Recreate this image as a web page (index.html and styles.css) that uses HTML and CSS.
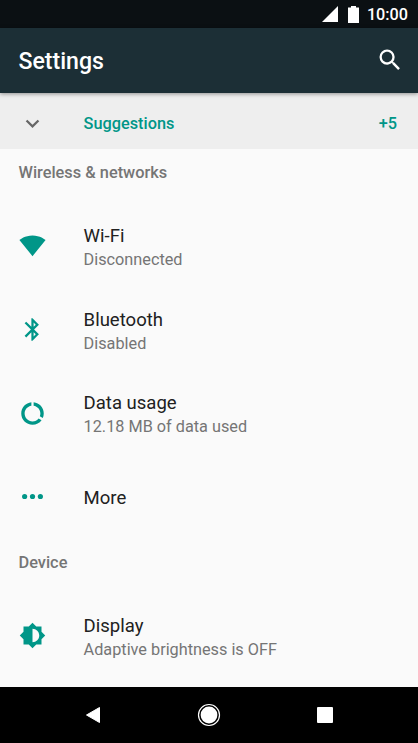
FILE: index.html
```html
<!DOCTYPE html>
<html lang="en">
<head>
<meta charset="utf-8">
<title>Settings</title>
<link rel="stylesheet" href="styles.css">
</head>
<body>
<div class="screen">
  <div class="status">
    <svg class="signal" viewBox="0 0 16 16"><path d="M0 16L16 0V16Z"/></svg>
    <svg class="battery" viewBox="0 0 11 17"><path d="M3 0h5v1.5h3V17H0V1.5h3z"/></svg>
    <span class="clock">10:00</span>
  </div>
  <header class="appbar">
    <h1>Settings</h1>
    <svg class="search" viewBox="0 0 24 24"><path d="M15.5 14h-.79l-.28-.27A6.47 6.47 0 0 0 16 9.5 6.5 6.5 0 1 0 9.5 16c1.61 0 3.09-.59 4.23-1.57l.27.28v.79l5 4.99L20.49 19l-4.99-5zm-6 0C7.01 14 5 11.99 5 9.5S7.01 5 9.5 5 14 7.01 14 9.5 11.99 14 9.5 14z"/></svg>
  </header>
  <div class="suggestions">
    <svg class="icon" viewBox="0 0 24 24"><path d="M16.59 8.59L12 13.17 7.41 8.59 6 10l6 6 6-6z"/></svg>
    <span class="label">Suggestions</span>
    <span class="count">+5</span>
  </div>
  <main class="list">
    <h2>Wireless &amp; networks</h2>
    <div class="row">
      <svg class="icon" viewBox="0 0 24 24"><path d="M12.01 21.49L23.64 7c-.45-.34-4.93-4-11.64-4C5.28 3 .81 6.66.36 7l11.63 14.49.01.01.01-.01z"/></svg>
      <div class="text"><div class="title">Wi-Fi</div><div class="sub">Disconnected</div></div>
    </div>
    <div class="row">
      <svg class="icon" viewBox="0 0 24 24"><path d="M17.71 7.71L12 2h-1v7.59L6.41 5 5 6.41 10.59 12 5 17.59 6.41 19 11 14.41V22h1l5.71-5.71-4.3-4.29 4.3-4.29zM13 5.83l1.88 1.88L13 9.59V5.83zm1.88 10.46L13 18.17v-3.76l1.88 1.88z"/></svg>
      <div class="text"><div class="title">Bluetooth</div><div class="sub">Disabled</div></div>
    </div>
    <div class="row">
      <svg class="icon" viewBox="0 0 24 24"><path d="M13 2.05v3.03c3.39.49 6 3.39 6 6.92 0 .9-.18 1.75-.48 2.54l2.6 1.53c.56-1.24.88-2.62.88-4.07 0-5.18-3.95-9.45-9-9.95zM12 19c-3.87 0-7-3.13-7-7 0-3.53 2.61-6.43 6-6.92V2.05c-5.06.5-9 4.76-9 9.95 0 5.52 4.47 10 9.99 10 3.31 0 6.24-1.61 8.06-4.09l-2.6-1.53C16.17 17.98 14.21 19 12 19z"/></svg>
      <div class="text"><div class="title">Data usage</div><div class="sub">12.18 MB of data used</div></div>
    </div>
    <div class="row">
      <svg class="icon" viewBox="0 0 24 24"><circle cx="5" cy="12" r="2.3"/><circle cx="12" cy="12" r="2.3"/><circle cx="19" cy="12" r="2.3"/></svg>
      <div class="text"><div class="title">More</div></div>
    </div>
    <h2 class="device">Device</h2>
    <div class="row">
      <svg class="icon" viewBox="0 0 24 24"><path fill-rule="evenodd" d="M20 15.31L23.31 12 20 8.69V4h-4.69L12 .69 8.69 4H4v4.69L.69 12 4 15.31V20h4.69L12 23.31 15.31 20H20v-4.69zM12 18V6c3.31 0 6 2.69 6 6s-2.69 6-6 6z"/></svg>
      <div class="text"><div class="title">Display</div><div class="sub">Adaptive brightness is OFF</div></div>
    </div>
  </main>
  <nav class="nav">
    <svg viewBox="0 0 24 24"><path d="M5.5 12L18.5 4.5v15z" stroke="currentColor" stroke-linejoin="round"/></svg>
    <svg viewBox="0 0 24 24"><circle cx="12" cy="12" r="8.4"/><circle class="ring" cx="12" cy="12" r="10.5"/></svg>
    <svg viewBox="0 0 24 24"><rect x="4" y="4" width="16" height="16" rx="1"/></svg>
  </nav>
</div>
</body>
</html>
```
FILE: styles.css
```css
* { box-sizing: border-box; }
body { margin: 0; font-family: Roboto, "Liberation Sans", sans-serif; }
svg { display: block; fill: currentColor; flex: none; }
h1, h2 { margin: 0; font-weight: 500; }
.screen { width: 418px; height: 743px; display: flex; flex-direction: column; background: #fafafa; overflow: hidden; }
.status { height: 28px; flex: none; background: #0b1013; color: #fff; display: flex; align-items: center; justify-content: flex-end; padding-right: 10px; }
.signal { width: 16px; height: 16px; }
.battery { width: 11px; height: 17px; margin: 0 8px 0 10px; }
.clock { font-size: 16.2px; font-weight: 500; line-height: 28px; padding-top: 1px; }
.appbar { height: 65px; flex: none; background: #1c2f36; color: #fff; display: flex; align-items: center; justify-content: space-between; padding: 2px 14px 0 18.5px; box-shadow: 0 1px 4px rgba(0,0,0,.4); position: relative; }
.appbar h1 { font-size: 23.1px; }
.search { width: 28px; height: 28px; margin-top: -3px; }
.suggestions { height: 56px; flex: none; background: #eee; display: flex; align-items: center; padding: 5px 21px 0 19px; color: #009688; font-size: 16.3px; font-weight: 500; }
.icon { width: 27px; height: 27px; margin-right: 37.6px; color: #009688; }
.suggestions .icon { color: #666; }
.count { margin-left: auto; }
.list { flex: 1; overflow: hidden; }
h2 { height: 55px; padding: 14px 18.5px 0; font-size: 16.35px; line-height: 19px; color: #757575; }
.row { height: 83.7px; display: flex; align-items: center; padding-left: 19px; }
.text { padding-top: 4px; }
.title { font-size: 18.55px; line-height: 23px; color: #212121; }
.sub { font-size: 16.25px; line-height: 23px; color: #757575; }
.nav { height: 56px; flex: none; background: #000; color: #fff; display: flex; align-items: center; justify-content: center; gap: 92px; }
.nav svg { width: 24px; height: 24px; }
.ring { fill: none; stroke: #fff; stroke-width: 1.2; }
```
